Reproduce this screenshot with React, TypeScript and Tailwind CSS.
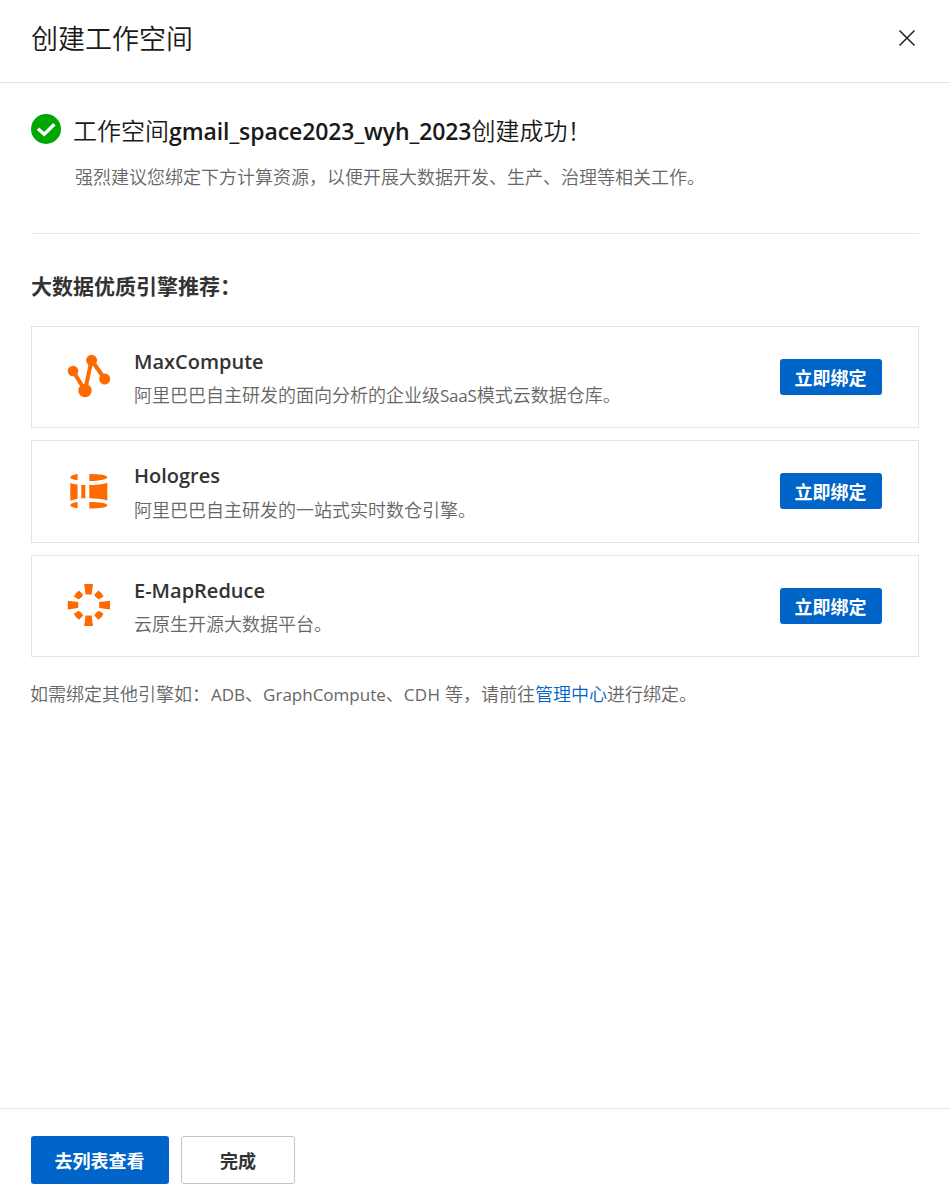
import type { ReactNode } from "react";

function MaxComputeIcon() {
  return (
    <svg width="44" height="44" viewBox="0 0 44 44" fill="#ff6a00">
      <path d="M6 17 18 36.5 24.6 6 37.7 25" fill="none" stroke="#ff6a00" strokeWidth="4" />
      <circle cx="6" cy="17" r="5.3" />
      <circle cx="18" cy="36.5" r="6.7" />
      <circle cx="24.6" cy="6.3" r="5.5" />
      <circle cx="37.7" cy="25" r="5.5" />
    </svg>
  );
}

function HologresIcon() {
  return (
    <svg width="44" height="44" viewBox="0 -1 44 44" fill="#ff6a00">
      <path d="M10.600 5v6.200C6.500 10.600 3.300 9.600 3.300 8.200S6.500 5.600 10.600 5Z" />
      <path d="M22.300 5c10 0 18 1.200 18 3.300s-8 3.700-18 3.700Z" />
      <path d="M3.300 13.700c2 1 4.500 1.600 7.300 1.900v14.300c-2.800.3-5.300.9-7.300 1.700Z" />
      <path d="M14.300 16h4v13.300h-4Z" />
      <path d="M22.300 16c7.500 0 14-.8 18-2.300v17.900c-4-1.400-10.500-2.300-18-2.300Z" />
      <path d="M10.600 33v6.300c-4.100-.6-7.300-1.700-7.300-3.100s3.200-2.600 7.300-3.200Z" />
      <path d="M22.300 33c10 0 18 1.100 18 3.200s-8 3.300-18 3.300Z" />
    </svg>
  );
}

function EMapReduceIcon() {
  return (
    <svg width="44" height="44" viewBox="0 0 44 44" fill="#ff6a00">
      <path d="M17.200 1h8.800l-1.400 10.400h-6Z" />
      <path d="M17.200 43h8.800l-1.400-10.400h-6Z" />
      <path d="M.8 17.800v8.600l10.400-1.300v-6Z" />
      <path d="M43 17.800v8.600l-10.800-1.300v-6Z" />
      <path d="M12 7.600 16.200 11.800Q15.300 14.500 11.800 16.600L6.800 13.600Q8.500 9.800 12 7.600Z" />
      <path d="M31.400 7.600 27.200 11.800Q28.200 14.500 31.800 16.600L36.600 13.600Q35 9.800 31.400 7.600Z" />
      <path d="M12 36.800 16.200 32.600Q15.300 30 11.800 27.800L6.800 30.800Q8.500 34.600 12 36.800Z" />
      <path d="M31.400 36.800 27.200 32.600Q28.200 30 31.800 27.800L36.600 30.800Q35 34.600 31.400 36.800Z" />
    </svg>
  );
}

function EngineCard({
  icon,
  title,
  className,
  descriptionClassName,
  children,
}: {
  icon: ReactNode;
  title: ReactNode;
  className: string;
  descriptionClassName: string;
  children: ReactNode;
}) {
  return (
    <div className={`flex items-start border border-[#e3e4e6] pl-[35px] pr-9 ${className}`}>
      <div className="mt-[27px] shrink-0">{icon}</div>
      <div className="mt-[18px] ml-[23px] flex-1">
        <div className="h-[33px] text-[20px] leading-[34px] font-semibold text-[#333]">{title}</div>
        <div className={`text-[18px] leading-[34px] whitespace-nowrap text-[#666] ${descriptionClassName}`}>
          {children}
        </div>
      </div>
      <button className="mt-8 h-9 w-[102px] rounded-[3px] bg-[#0064c8] pt-0.5 pr-px text-[18px] leading-[34px] font-bold text-white">
        立即绑定
      </button>
    </div>
  );
}

export default function App() {
  return (
    <div className="flex h-[1203px] w-[950px] flex-col bg-white font-['Open_Sans','Noto_Sans_CJK_SC',sans-serif] font-[350] text-[#1a1a1a]">
      <header className="flex h-[83px] shrink-0 items-start justify-between border-b border-[#e3e4e6] pt-[18px] pr-[34px] pl-[31px]">
        <h1 className="text-[27px] leading-[42px]">创建工作空间</h1>
        <svg className="mt-[11px]" width="18" height="18" viewBox="0 0 18 18" stroke="#222" strokeWidth="1.5" fill="none">
          <path d="m1.500 1.500 15 15M16.500 1.500 1.500 16.500" />
        </svg>
      </header>

      <main className="flex-1 px-[31px]">
        <section className="flex h-[151px] border-b border-[#e8e8ea] pt-[31px]">
          <svg className="shrink-0" width="30" height="30" viewBox="0 0 30 30">
            <circle cx="15" cy="15" r="15" fill="#00a700" />
            <path d="m7 14.700 6.200 5.500 10.200-10" fill="none" stroke="#fff" strokeWidth="3.400" />
          </svg>
          <div className="-mt-px ml-3 whitespace-nowrap">
            <h2 className="h-9 text-[24px] leading-9">
              工作空间
              <span className="text-[23px] font-semibold tracking-[-0.09px]">gmail_space2023_wyh_2023</span>
              创建成功！
            </h2>
            <p className="mt-[13px] ml-[2px] text-[18px] leading-[30px] text-[#666]">
              强烈建议您绑定下方计算资源，以便开展大数据开发、生产、治理等相关工作。
            </p>
          </div>
        </section>

        <h3 className="mt-9 h-8 text-[21px] leading-8 font-bold text-[#333]">大数据优质引擎推荐：</h3>

        <div className="mt-6 flex flex-col gap-3">
          <EngineCard className="h-[102px]" descriptionClassName="pt-0" icon={<MaxComputeIcon />} title="MaxCompute">
            阿里巴巴自主研发的面向分析的企业级
            <span className="text-[17px] font-normal tracking-[-0.2px]">SaaS</span>模式云数据仓库。
          </EngineCard>
          <EngineCard className="h-[103px]" descriptionClassName="pt-px" icon={<HologresIcon />} title="Hologres">
            阿里巴巴自主研发的一站式实时数仓引擎。
          </EngineCard>
          <EngineCard className="h-[102px]" descriptionClassName="pt-0" icon={<EMapReduceIcon />} title="E-MapReduce">
            云原生开源大数据平台。
          </EngineCard>
        </div>

        <p className="mt-[22px] -ml-px text-[18px] leading-[30px] whitespace-nowrap text-[#666]">
          如需绑定其他引擎如：
          <span className="ml-px text-[17px] font-normal">ADB</span>、
          <span className="text-[17px] font-normal">GraphCompute</span>、
          <span className="text-[17px] font-normal tracking-[0.3px]">CDH </span>等，请前往
          <a className="text-[#0064c8]">管理中心</a>进行绑定。
        </p>
      </main>

      <footer className="flex h-[95px] shrink-0 gap-3 border-t border-[#e3e4e6] pt-[27px] pl-[31px] text-[18px] font-bold">
        <button className="h-12 w-[138px] rounded-[3px] bg-[#0064c8] pt-0.5 pr-px text-white">去列表查看</button>
        <button className="h-12 w-[114px] rounded-[3px] border border-[#c0c6cc] pt-0.5 text-[#333]">完成</button>
      </footer>
    </div>
  );
}
